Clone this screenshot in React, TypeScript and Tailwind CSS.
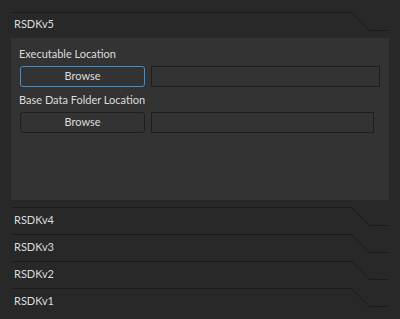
const sections = ["RSDKv4", "RSDKv3", "RSDKv2", "RSDKv1"];

const TabHeader = ({ title, h }: { title: string; h: string }) => (
  <div className={`relative ${h} flex items-center pl-[3px] text-[11px] text-[#dcdcdc]`}>
    <svg className="absolute left-0 top-0" width="378" height="20" viewBox="0 0 378 20">
      <path d="M0 0.5 H340.5 L358.5 18.5 H378" fill="none" stroke="#1b1b1b" strokeWidth="1" />
    </svg>
    <span className="relative -mt-[1px]">{title}</span>
  </div>
);

const PathRow = ({ focused, fieldW }: { focused?: boolean; fieldW: string }) => (
  <div className="flex gap-[6px] ml-px">
    <button
      className={`w-[125px] h-[21px] rounded-[3px] border bg-[#333333] text-[11px] text-[#dcdcdc] ${
        focused ? "border-[#3d8fd1]" : "border-[#1f1f1f]"
      }`}
    >
      Browse
    </button>
    <div className={`${fieldW} h-[21px] border border-[#1e1e1e] bg-[#333333]`} />
  </div>
);

export default function App() {
  return (
    <div
      className="w-[400px] h-[319px] bg-[#282828] px-[11px] pt-[12px] overflow-hidden"
      style={{ fontFamily: 'Lato, "Noto Sans", sans-serif' }}
    >
      <TabHeader title="RSDKv5" h="h-[26px]" />
      <div className="h-[162px] bg-[#333333] px-[8px] pt-[8px] flex flex-col">
        <p className="h-[16px] leading-[16px] text-[11px] text-[#dcdcdc]">Executable Location</p>
        <div className="mt-[4px]">
          <PathRow focused fieldW="w-[229px]" />
        </div>
        <p className="mt-[5px] h-[16px] leading-[16px] text-[11px] text-[#dcdcdc]">Base Data Folder Location</p>
        <div className="mt-[4px]">
          <PathRow fieldW="w-[223px]" />
        </div>
      </div>
      <div className="mt-[7px] flex flex-col">
        {sections.map((s) => (
          <TabHeader key={s} title={s} h="h-[27px]" />
        ))}
      </div>
    </div>
  );
}
